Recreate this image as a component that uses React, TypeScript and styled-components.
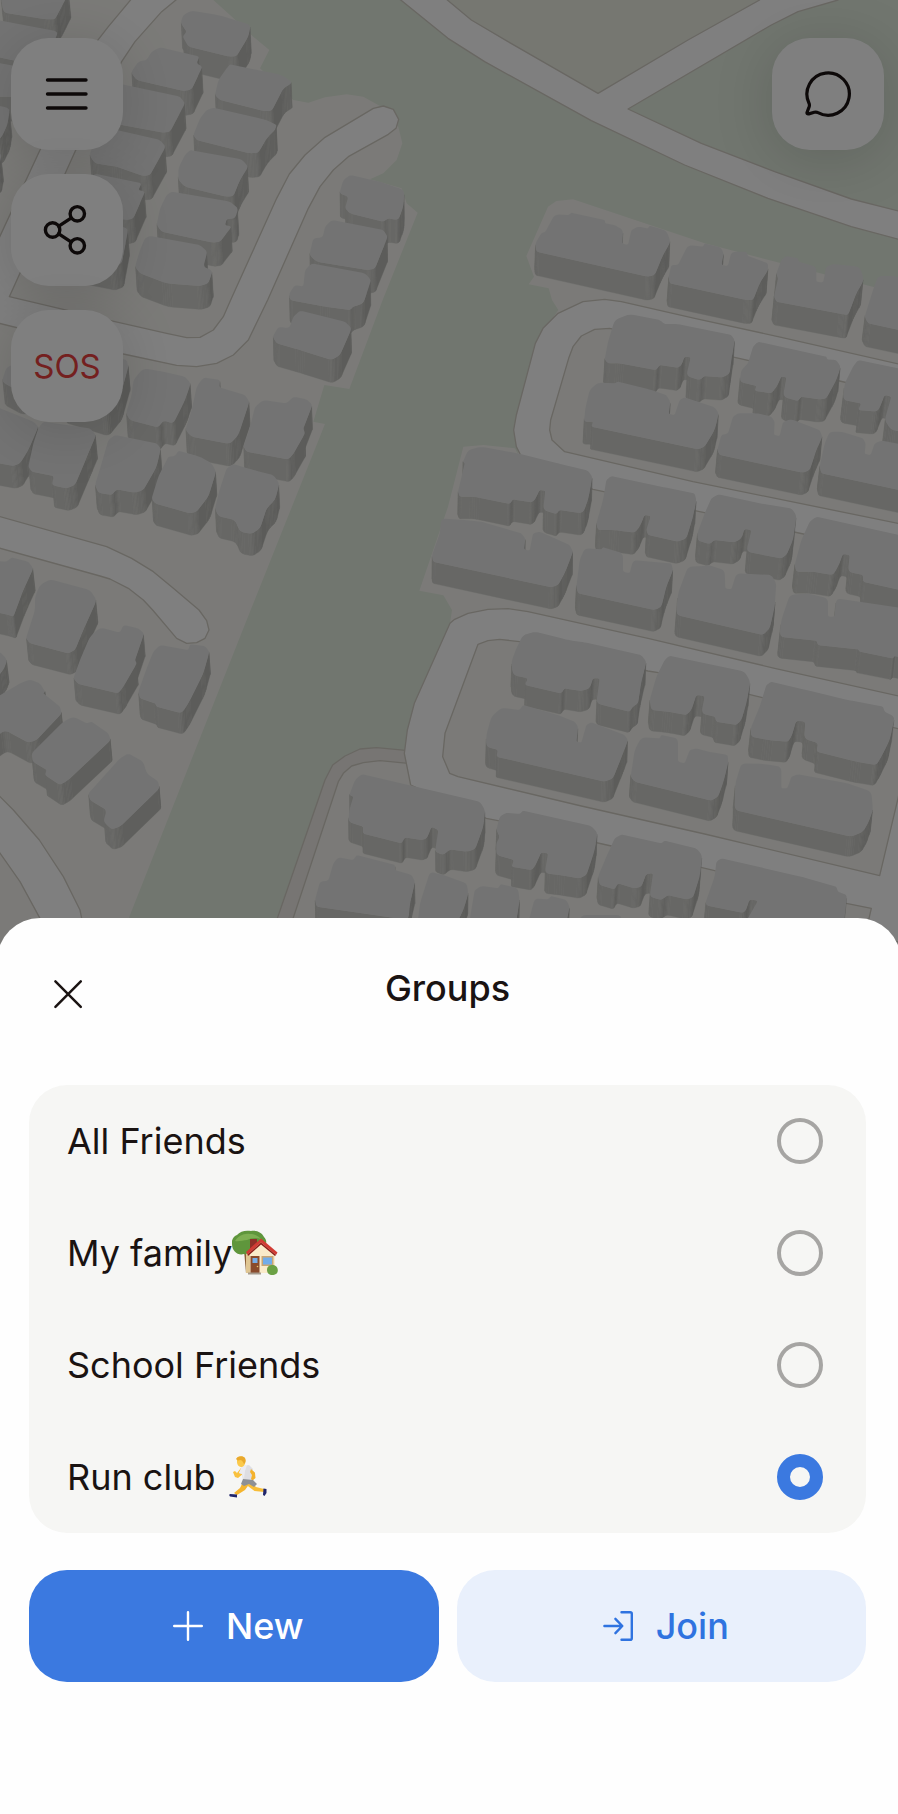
import React, { useState } from "react";
import styled, { createGlobalStyle } from "styled-components";

const GlobalStyle = createGlobalStyle`
  *, *::before, *::after { box-sizing: border-box; }
  body {
    margin: 0;
    background: #ffffff;
    color: #1a1312;
    font-family: Inter, "Liberation Sans", sans-serif;
    -webkit-font-smoothing: antialiased;
  }
  button { font: inherit; cursor: pointer; }
`;

/* ---------- layout ---------- */

const Screen = styled.main`
  position: relative;
  display: flex;
  flex-direction: column;
  min-height: 100vh;
  overflow: hidden;
`;

const Hero = styled.section`
  position: relative;
  flex: 1;
  display: flex;
  justify-content: space-between;
  align-items: flex-start;
  min-height: 480px;
  padding: 38px 14px 0 11px;
`;

const MapSvg = styled.svg`
  position: absolute;
  inset: 0 0 -60px 0;
  width: 100%;
  height: calc(100% + 60px);
`;

const Scrim = styled.div`
  position: absolute;
  inset: 0 0 -60px 0;
  background: rgba(0, 0, 0, 0.5);
`;

const Controls = styled.div`
  position: relative;
  display: flex;
  flex-direction: column;
  gap: 24px;
`;

const MapButton = styled.button<{ $danger?: boolean }>`
  display: flex;
  align-items: center;
  justify-content: center;
  width: 112px;
  height: 112px;
  padding: 0;
  border: 0;
  border-radius: 38px;
  background: #ffffff;
  box-shadow: 0 8px 60px rgba(0, 0, 0, 0.15);
  color: ${(p) => (p.$danger ? "#e8403e" : "#1a1312")};
  font-size: 33px;
`;

const Sheet = styled.section`
  position: relative;
  margin: 0 -3px;
  padding: 0 35px 132px 32px;
  border-radius: 43px 43px 0 0;
  background: #fefefe;
`;

const SheetHeader = styled.header`
  display: grid;
  grid-template-columns: 1fr auto 1fr;
  align-items: start;
  height: 167px;
  padding: 48px 11px 0 11px;
`;

const SheetTitle = styled.h1`
  margin: 0;
  font-size: 36px;
  line-height: 44px;
  font-weight: 500;
`;

const CloseButton = styled.button`
  display: flex;
  align-items: center;
  justify-content: center;
  width: 56px;
  height: 56px;
  padding: 0;
  border: 0;
  background: none;
  color: inherit;
`;

const GroupList = styled.fieldset`
  margin: 0;
  padding: 0;
  border: 0;
  border-radius: 38px;
  background: #f6f6f4;
`;

const GroupRow = styled.label`
  display: flex;
  align-items: center;
  justify-content: space-between;
  height: 112px;
  padding: 0 43px 0 38px;
  font-size: 36px;
  line-height: 44px;
  cursor: pointer;
`;

const GroupName = styled.span<{ $gap: number }>`
  display: flex;
  align-items: center;
  gap: ${(p) => p.$gap}px;
`;

const Radio = styled.input`
  appearance: none;
  width: 46px;
  height: 46px;
  margin: 0;
  border: 4px solid #a6a5a3;
  border-radius: 50%;
  background: transparent;
  cursor: pointer;

  &:checked {
    border: 13px solid #3b79e0;
  }
`;

const Actions = styled.div`
  display: flex;
  gap: 18px;
  margin-top: 37px;
`;

const ActionButton = styled.button<{ $primary?: boolean }>`
  flex: 1;
  display: flex;
  align-items: center;
  justify-content: center;
  gap: 14px;
  height: 112px;
  padding: 0;
  border: 0;
  border-radius: 38px;
  background: ${(p) => (p.$primary ? "#3b79e0" : "#e9f0fc")};
  color: ${(p) => (p.$primary ? "#ffffff" : "#2f73e0")};
  font-size: 36px;
  font-weight: 500;
`;

/* ---------- map geometry, in thirds of a pixel ---------- */

type Pt = [number, number];

const parse = (text: string, ox = 0, oy = 0): Pt[] =>
  text
    .trim()
    .split(/\s+/)
    .map((pair) => {
      const [x, y] = pair.split(",").map(Number);
      return [x + ox, y + oy] as Pt;
    });

const toText = (pts: Pt[]) =>
  pts.map(([x, y]) => `${x.toFixed(1)},${y.toFixed(1)}`).join(" ");

const clockwise = (pts: Pt[]): Pt[] => {
  let area = 0;
  pts.forEach(([x, y], i) => {
    const [nx, ny] = pts[(i + 1) % pts.length];
    area += x * ny - nx * y;
  });
  return area > 0 ? pts : [...pts].reverse();
};

const roundCorners = (pts: Pt[], radius: number): Pt[] => {
  const out: Pt[] = [];
  pts.forEach((p, i) => {
    const a = pts[(i + pts.length - 1) % pts.length];
    const b = pts[(i + 1) % pts.length];
    const la = Math.hypot(a[0] - p[0], a[1] - p[1]);
    const lb = Math.hypot(b[0] - p[0], b[1] - p[1]);
    const r = Math.min(radius, la / 3, lb / 3);
    const s: Pt = [p[0] + ((a[0] - p[0]) * r) / la, p[1] + ((a[1] - p[1]) * r) / la];
    const e: Pt = [p[0] + ((b[0] - p[0]) * r) / lb, p[1] + ((b[1] - p[1]) * r) / lb];
    for (let k = 0; k <= 4; k++) {
      const t = k / 4;
      const u = 1 - t;
      out.push([
        u * u * s[0] + 2 * u * t * p[0] + t * t * e[0],
        u * u * s[1] + 2 * u * t * p[1] + t * t * e[1],
      ]);
    }
  });
  return out;
};

const TILES: { x: number; y: number; roofs: string[] }[] = [
  {
    x: 0,
    y: 0,
    roofs: [
      "0,-30 210,-30 185,20 165,58 140,58 10,38",
      "-60,50 175,95 160,130 60,185 -60,160",
      "-60,180 60,200 60,290 -60,290",
      "-80,300 30,325 22,375 0,420 -80,400",
      "-80,440 5,460 -5,510 -80,500",
      "575,32 655,45 752,75 745,110 710,168 690,170 565,140 548,110 560,95 542,68 550,45",
      "480,142 598,170 590,190 607,200 575,268 550,273 410,240 393,218 415,185 440,180 455,155",
      "690,193 845,225 878,248 850,265 815,333 790,333 660,300 645,285 655,240 680,205",
      "330,245 540,290 555,310 510,395 490,398 340,370",
      "640,323 800,360 830,375 825,390 800,415 775,458 750,460 590,420 580,405 600,355 620,330",
      "330,385 480,420 497,440 450,525 430,528 350,500 285,490 268,465 290,410",
      "570,450 725,478 745,500 720,540 700,588 680,590 555,560 535,540 535,505 555,465",
      "280,520 425,550 415,570 435,575 400,655 380,660 260,630",
      "515,575 690,605 715,625 705,655 680,658 675,675 695,680 660,725 640,728 485,695 470,675 480,625 500,585",
      "250,650 385,685 365,790 340,800 240,780",
      "450,708 600,735 622,755 610,800 638,812 625,850 600,858 500,850 420,820 405,800 420,750 435,715",
      "1050,525 1140,545 1213,570 1210,620 1195,660 1165,655 1150,665 1050,640 1035,625 1045,590 1018,580 1030,540",
      "995,660 1150,690 1163,710 1125,805 1105,810 950,785 928,765 940,715 968,712 975,680",
      "935,790 1095,820 1113,840 1090,910 1060,920 1050,930 975,920 870,900 868,880 885,855 910,860 915,810",
    ],
  },
  {
    x: 1344,
    y: 0,
    roofs: [
      "320,643 362,645 370,638 470,660 472,670 500,675 525,690 522,730 540,735 550,690 570,680 600,685 605,677 655,692 668,725 645,765 620,825 600,830 265,755 262,730 280,700 292,695",
      "720,735 765,740 770,730 818,742 827,760 820,795 840,798 850,755 895,755 900,768 960,790 960,810 935,850 915,900 895,900 665,850 662,830 670,795 690,795",
      "1000,780 1015,768 1050,775 1052,785 1105,800 1105,845 1125,848 1135,800 1155,792 1235,800 1248,840 1225,880 1200,945 1180,942 985,905 978,890 990,835 985,820",
      "1290,828 1340,828 1400,850 1400,1000 1260,970 1250,950 1275,870",
    ],
  },
  {
    x: 0,
    y: 900,
    roofs: [
      "900,32 1035,65 1055,85 1020,165 995,180 900,150 830,130 818,110 835,80 868,85 880,50",
      "20,200 100,180 100,270 60,275 5,245",
      "200,130 380,180 385,200 360,290 320,340 190,300",
      "430,205 490,215 555,230 572,250 555,300 520,370 490,362 475,382 390,360 378,340 395,285 400,240",
      "610,232 660,240 658,262 735,285 748,305 715,405 690,432 575,410 556,390 575,330 590,260",
      "790,300 860,310 880,290 920,298 937,315 910,385 915,400 880,462 865,478 740,455 730,440 750,380 765,320",
      "-60,300 100,365 115,380 85,450 60,490 40,498 -60,480",
      "130,365 270,385 288,405 265,460 225,555 200,565 155,555 162,528 95,515 85,500 100,430 115,385",
      "345,405 470,430 482,445 470,500 430,570 405,578 350,568 335,585 295,578 285,555 305,490 325,420",
      "535,452 600,470 635,490 648,515 625,590 590,635 570,640 465,610 455,595 475,530 505,470 525,468",
      "700,492 760,510 820,525 838,550 825,600 800,625 780,685 755,702 720,695 705,660 655,648 645,625 660,565 680,505",
      "-40,780 20,785 35,772 85,785 100,805 70,870 40,950 25,945 -40,930",
    ],
  },
  {
    x: 1344,
    y: 900,
    roofs: [
      "545,42 635,60 650,72 690,72 850,105 860,120 850,180 845,220 825,232 770,228 755,240 715,228 728,172 710,170 700,195 690,203 635,195 625,210 515,190 480,190 470,178 480,125 500,60",
      "450,248 500,250 510,245 610,270 655,285 667,305 662,342 680,345 695,300 710,292 800,322 812,340 800,390 770,440 750,448 430,380 435,365 408,365 412,325 425,270",
      "930,125 1135,170 1138,178 1165,180 1178,200 1165,240 1135,295 1115,298 1060,290 1050,303 1005,290 1015,232 1000,230 985,262 970,280 920,272 925,258 875,245 880,210 900,190 915,140",
      "870,340 930,340 970,350 980,365 978,405 995,408 1005,365 1030,358 1115,390 1123,410 1105,450 1085,510 1065,518 815,465 808,450 820,405 840,400 855,350",
      "1230,180 1400,215 1400,400 1330,390 1310,360 1330,290 1310,285 1290,335 1230,330 1240,310 1185,300 1190,250 1215,200",
      "1145,395 1180,395 1245,415 1253,430 1250,462 1268,465 1280,430 1300,422 1400,440 1400,580 1120,520 1115,500 1130,430",
      "60,450 100,440 210,460 330,490 420,512 433,530 420,600 405,640 335,630 325,642 285,630 292,572 275,570 260,600 250,607 195,598 185,612 80,590 35,590 30,575 50,490 45,485",
      "-20,655 50,660 100,665 220,700 232,715 228,748 245,752 255,700 275,695 365,735 375,755 350,820 330,855 310,862 -45,785 -48,765 -30,715 -25,700",
      "490,528 640,560 740,580 745,600 735,650 715,715 690,725 600,705 595,690 608,648 590,645 575,680 560,698 500,690 450,690 445,670 465,600 475,540",
      "410,745 460,748 465,742 525,760 525,815 545,820 555,780 670,790 675,810 655,860 640,920 620,930 390,880 385,860 395,780",
      "810,583 935,610 1030,625 1045,645 1035,720 1015,765 1000,775 895,755 910,690 890,687 880,715 860,727 800,720 785,732 750,722 748,700 770,640 790,595",
      "720,800 770,798 780,795 830,810 832,865 850,868 865,820 970,825 985,850 980,920 965,985 945,1005 685,945 690,880",
      "1105,650 1400,715 1400,880 1245,845 1245,825 1200,815 1205,765 1185,762 1170,800 1155,825 1095,815 1045,815 1040,795 1060,720 1085,665",
      "1025,885 1080,880 1140,895 1140,950 1160,950 1165,895 1400,930 1400,1080 1340,1068 1335,1075 1235,1055 1230,1048 1110,1035 1105,1022 995,1010 1000,960",
    ],
  },
  {
    x: 0,
    y: 1830,
    roofs: [
      "150,-92 270,-60 290,-30 250,60 225,120 205,130 90,100 78,85 105,0 105,-40 120,-75",
      "300,52 360,68 370,45 415,55 432,70 405,150 410,160 370,230 355,250 235,222 220,205 240,150 270,80",
      "480,105 565,120 570,103 615,108 628,125 610,190 565,280 545,310 470,290 465,280 420,265 415,245 440,175 460,125",
      "-60,120 0,125 22,150 10,180 -60,260",
      "90,208 120,220 135,245 130,250 180,290 185,310 110,390 85,398 15,360 -40,400 -40,280 60,220",
      "220,320 260,340 275,335 325,370 332,390 205,510 180,525 135,495 140,480 98,455 95,430 190,335",
      "385,430 430,455 440,490 475,515 478,535 360,650 335,658 310,635 320,600 270,570 265,550 360,445",
      "1085,492 1440,575 1455,600 1450,650 1425,718 1400,725 1350,718 1330,735 1305,725 1315,660 1295,650 1280,685 1265,690 1215,682 1205,700 1088,670 1090,650 1045,635 1048,600 1060,560 1048,555 1065,510",
      "1015,742 1060,750 1070,735 1185,765 1185,780 1235,795 1245,815 1230,880 1225,930 950,890 945,870 960,815 985,812 1000,760",
      "1290,785 1330,795 1400,820 1405,850 1390,900 1360,960 1250,960 1260,880",
    ],
  },
  {
    x: 1344,
    y: 1830,
    roofs: [
      "262,65 360,90 410,97 580,135 595,155 580,215 570,280 555,290 545,305 445,280 455,205 435,205 425,235 400,243 350,235 340,250 230,225 240,205 195,195 190,155 205,115 225,75",
      "160,293 215,300 225,285 330,315 380,335 390,350 385,395 400,398 415,345 430,337 530,375 540,390 525,430 495,505 470,515 145,440 150,420 115,410 115,375 130,320",
      "665,137 890,185 907,215 895,280 880,330 865,345 805,335 800,320 760,310 770,258 745,255 730,300 715,315 660,305 610,300 605,270 625,200 650,150",
      "580,382 635,385 640,375 690,385 690,455 710,460 725,420 745,415 780,425 840,435 840,460 825,520 810,560 790,572 560,515 548,500 560,420",
      "970,215 1075,240 1200,270 1305,290 1310,305 1340,320 1325,390 1300,440 1285,465 1225,455 1105,425 1110,400 1068,385 1072,335 1045,332 1030,380 1020,395 960,390 910,380 908,355 935,290 955,225",
      "880,460 950,462 1000,470 1000,535 1018,535 1030,500 1050,493 1200,520 1270,545 1275,600 1260,640 1245,665 1210,680 860,600 862,520",
      "175,608 215,612 225,602 430,648 448,668 440,720 415,795 395,805 335,795 290,790 300,730 280,727 260,770 250,780 190,770 198,750 145,735 145,700 155,680 145,660 155,620",
      "520,673 640,700 650,692 745,715 762,735 755,800 735,862 715,868 660,855 640,870 605,860 615,790 595,792 580,830 560,835 510,820 500,838 455,825 450,800 475,740 500,685",
      "820,745 1060,800 1165,830 1170,845 1197,855 1185,960 880,960 930,872 905,868 890,910 770,885 800,800 805,755",
      "100,828 150,835 158,822 210,835 215,870 200,960 60,960 80,840",
      "260,865 300,868 310,858 355,870 365,890 350,960 235,960",
      "400,915 520,915 520,960 390,960",
    ],
  },
];

const centreY = (pts: Pt[]) => pts.reduce((sum, p) => sum + p[1], 0) / pts.length;

const ROOFS: Pt[][] = TILES.flatMap((tile) =>
  tile.roofs.map((roof) => clockwise(parse(roof, tile.x, tile.y)))
).sort((a, b) => centreY(a) - centreY(b));

const ROADS = {
  park:
    "640,0 690,45 760,110 808,150 780,205 880,300 925,308 975,292 1040,283 1090,290 1140,318 1195,380 1207,430 1190,480 1150,520 1110,538 1205,565 1220,610 1253,638 1148,900 1048,1167 973,1155 940,1265 975,1272 752,1830 388,2750 388,2934 770,2934 832,2750 975,2340 998,2295 1035,2268 1080,2247 1130,2243 1215,2252 1222,2190 1243,2110 1350,1870 1356,1830 1330,1786 1258,1772 1344,1520 1390,1340 1450,1335 1545,1345 1555,1365 1541,1290 1606,1030 1675,930 1656,900 1646,865 1586,853 1602,830 1579,768 1644,620 1669,603 1719,598 2114,730 2694,880 2694,0",
  meadow: "1330,0 2280,0 1793,290 1344,20",
  diagonal:
    "1190,-10 1344,115 1454,185 1774,362 2054,495 2304,595 2554,680 2704,720 2704,635 2554,597 2324,515 2104,430 1884,327 2314,75 2394,35 2514,0 2514,-10 2279,-10 2279,0 2064,120 1794,280 1524,125 1414,60 1330,-10",
  west:
    "400,-10 325,80 290,125 120,450 -10,730 -10,968 370,1062 530,1096 590,1100 650,1090 700,1065 745,1020 803,900 925,625 960,560 1000,510 1045,470 1165,403 1188,385 1196,358 1180,328 1150,318 1120,325 975,412 915,465 868,522 830,595 692,900 670,950 640,990 600,1012 560,1013 500,1000 345,965 28,890 225,455 365,185 405,125 485,35 540,-10",
  lane:
    "-10,1547 320,1640 395,1675 460,1715 520,1765 597,1830 620,1862 627,1890 615,1915 590,1928 560,1930 530,1915 458,1830 430,1800 385,1765 330,1737 300,1728 -10,1642",
  corner:
    "-10,2380 40,2430 118,2520 190,2630 240,2730 260,2830 180,2860 120,2755 60,2645 -10,2545",
};

const LOOPS = [
  {
    y: 900,
    road: "520,5 740,55 1000,112 1360,194 1360,770 1080,705 780,640 435,568 220,470 205,440 197,390 205,345 262,130 285,85 330,40 405,5 470,-2",
    island:
      "485,85 440,88 400,108 375,140 362,175 308,360 305,390 312,420 350,455 735,545 1360,672 1360,287 1175,243 860,172",
  },
  {
    y: 1830,
    road: "240,5 600,85 980,175 1360,260 1360,1000 1255,960 1270,895 1195,880 800,782 490,708 150,632 115,625 -112,525 -131,430 -122,360 -101,280 6,40 20,28 60,10 120,-2 180,-4",
    island:
      "90,103 120,92 155,88 215,95 600,183 645,190 940,262 1360,358 1360,520 1350,565 1295,797 770,672 400,588 30,500 5,490 -16,440 -9,370",
  },
];

const TRACK =
  "832,2755 975,2340 998,2295 1035,2268 1080,2247 1130,2243 1225,2252 1225,2290 1140,2282 1090,2288 1055,2298 1030,2320 1015,2345 820,2934 770,2934";

function Building({ roof }: { roof: Pt[] }) {
  const outline = roundCorners(roof, 14);
  const [x0, y0] = [roof[0][0], centreY(roof)];
  const wx = (1200 - x0) * 0.006;
  const wy = 75 - y0 * 0.006;
  const walls = outline
    .map((a, i) => {
      const b = outline[(i + 1) % outline.length];
      const ex = b[0] - a[0];
      const ey = b[1] - a[1];
      const len = Math.hypot(ex, ey) || 1;
      const facing = ey * wx - ex * wy;
      const side = ey / len;
      const tone = Math.round(208 - (side > 0 ? side * 26 : -side * 6));
      return { a, b, facing, tone, mid: (a[1] + b[1]) / 2 };
    })
    .filter((wall) => wall.facing > 0.01)
    .sort((p, q) => p.mid - q.mid);
  return (
    <g>
      {walls.map(({ a, b, tone }, i) => {
        const fill = `rgb(${tone},${tone},${tone - 4})`;
        return (
          <polygon
            key={i}
            points={toText([a, b, [b[0] + wx, b[1] + wy], [a[0] + wx, a[1] + wy]])}
            fill={fill}
            stroke={fill}
            strokeWidth={1}
          />
        );
      })}
      <polygon points={toText(outline)} fill="#e7e7e7" />
    </g>
  );
}

function StreetMap() {
  const edge = { stroke: "#d2cec5", strokeWidth: 4, strokeLinejoin: "round" as const };
  return (
    <MapSvg viewBox="0 0 2694 2934" preserveAspectRatio="xMidYMin slice" aria-hidden="true">
      <rect width="2694" height="2934" fill="#f6f5f0" />
      <polygon points={ROADS.park} fill="#e2ecde" />
      <polygon points={ROADS.meadow} fill="#ecefe3" />
      <polygon points={TRACK} fill="#eeebe6" {...edge} />
      {[ROADS.diagonal, ROADS.west, ROADS.lane, ROADS.corner].map((road) => (
        <polygon key={road} points={road} fill="#ffffff" {...edge} />
      ))}
      {LOOPS.map((loop) => (
        <g key={loop.y} transform={`translate(1344 ${loop.y})`}>
          <polygon points={loop.road} fill="#ffffff" {...edge} />
          <polygon points={loop.island} fill="#f6f5f0" {...edge} />
        </g>
      ))}
      {ROOFS.map((roof, i) => (
        <Building key={i} roof={roof} />
      ))}
    </MapSvg>
  );
}

/* ---------- icons ---------- */

const line = {
  fill: "none",
  stroke: "currentColor",
  strokeLinecap: "round" as const,
  strokeLinejoin: "round" as const,
};

const MenuIcon = () => (
  <svg width="48" height="48" viewBox="0 0 48 48" strokeWidth="3.4" {...line} aria-hidden="true">
    <path d="M4.5 10h38.5M4.5 24h38.5M4.5 38h38.5" />
  </svg>
);

const ShareIcon = () => (
  <svg width="56" height="56" viewBox="0 0 56 56" strokeWidth="3.4" {...line} aria-hidden="true">
    <circle cx="38.3" cy="11.8" r="7.2" />
    <circle cx="13.6" cy="28" r="7.2" />
    <circle cx="38.3" cy="43.8" r="7.2" />
    <path d="M19.8 24.2L32 16.2M19.8 31.8L32 39.8" />
  </svg>
);

const ChatIcon = () => (
  <svg width="48" height="48" viewBox="0 0 48 48" strokeWidth="3.2" {...line} aria-hidden="true">
    <path d="M5 33.2A21.2 21.2 0 1 1 14 42.7C12.8 42 11.6 41.9 10.3 42.3L4.800 43.900C3.400 44.300 2.700 43.500 3.100 42.200L5.200 36.600C5.600 35.400 5.500 34.300 5 33.200Z" />
  </svg>
);

const CloseIcon = () => (
  <svg width="32" height="32" viewBox="0 0 32 32" strokeWidth="2.5" {...line} aria-hidden="true">
    <path d="M3.4 3.4l25.4 25.4M28.8 3.4L3.4 28.8" />
  </svg>
);

const PlusIcon = () => (
  <svg width="48" height="48" viewBox="0 0 48 48" strokeWidth="2.4" {...line} aria-hidden="true">
    <path d="M24 10.2v27.6M10.2 24h27.6" />
  </svg>
);

const JoinIcon = () => (
  <svg width="48" height="48" viewBox="0 0 48 48" strokeWidth="2.4" {...line} aria-hidden="true">
    <path d="M27.5 10.2h8.7a1.6 1.6 0 0 1 1.6 1.6v24.4a1.6 1.6 0 0 1-1.6 1.6h-8.7M10.4 24h17.8M21.4 16.8l6.9 7.2-6.9 7.2" />
  </svg>
);

const HouseEmoji = () => (
  <svg width="46" height="46" viewBox="0 0 46 46" role="img" aria-label="house with garden">
    <path d="M12 20h6v23h-4z" fill="#8a5f35" />
    <path
      d="M0 14c-1-4 2-8 5-9 3-4 9-5 14-4 6-1 11 2 13 6 3 3 3 7 0 9-2 5-6 6-9 6-2 3-7 4-11 2-6 2-12-3-12-10z"
      fill="#5f963c"
    />
    <path d="M3 11c3-5 9-8 15-7 5 0 8 2 11 5-5-2-10-1-14 1-4 0-8 2-12 1z" fill="#86b557" opacity=".8" />
    <path d="M16 23l13-12 14 13v19H15z" fill="#faebca" />
    <path d="M14 24v19h4V22z" fill="#e0c692" />
    <path d="M18 9h7v6l-7 6z" fill="#8f2f28" />
    <path d="M14 22L29 8.500 45.500 22.500 44 25 29 12.500 15.500 24.500z" fill="#d23b34" />
    <path d="M15.500 24.500L29 12.500 44 25l-1 1L29 14.500 16 26z" fill="#8d1d1b" />
    <rect x="18.500" y="26" width="9" height="17" fill="#8a4b2c" />
    <rect x="20.500" y="28" width="5" height="5" fill="#76aee8" />
    <circle cx="25.500" cy="36.500" r=".8" fill="#e9c56b" />
    <rect x="29.500" y="26" width="12" height="10" fill="#c9a674" />
    <rect x="31" y="27.500" width="9" height="7" fill="#72adea" />
    <path d="M16 42.500h13v2H16z" fill="#a59a8c" />
    <path d="M35 40c0-4 3-5 5.500-5s5.500 2 5.300 5.500c0 3-2.500 4.500-5.500 4.500s-5.300-2-5.300-5z" fill="#6ba144" />
  </svg>
);

const RunnerEmoji = () => (
  <svg width="38" height="42" viewBox="0 0 38 42" role="img" aria-label="runner">
    <path d="M14 26l-3 6-6 5 3 2 8-5 5-7z" fill="#f5b52e" />
    <path d="M22 26l5 5 8 2 .5 3-10-1-8-6z" fill="#f7bd38" />
    <path d="M12 12l-4 5-2-2-2 1 2 5 3 1 6-5z" fill="#f9c13e" />
    <path d="M21 12l5 5-1 6-3 1-1-2 2-4-4-4z" fill="#f4b22c" />
    <path d="M13 10l7-1 4 4-1 12-9-1-1-6-3-1z" fill="#dedee2" />
    <path d="M13 10l5-1-2 6-1 8-2-5-3-1z" fill="#ececf0" />
    <path d="M22 13l4 4 .5 5-3 2.500-1.500-1.500 1-4-2-3z" fill="#f4b22c" />
    <path d="M14 23l10 1 4 4-3 3-5-3-5 2-3-2z" fill="#8d9095" />
    <path d="M8 2c2-2 7-2 8 1 1 3 0 7-3 8-3 0-5-2-5-5z" fill="#fbc94b" />
    <path d="M7 3c1-3 7-4 9-1 1 2 1 4-1 6-1-2-2-4-4-4-2 1-3 0-4-1z" fill="#e9a92c" />
    <path d="M1 38l7 .5v3L1 40.500c-1-1-1-2 0-2.500z" fill="#20256b" />
    <path d="M34.500 32.500l3 .5v4l-2 3-1.500-1z" fill="#20256b" />
  </svg>
);

/* ---------- screen ---------- */

const GROUPS: { id: string; name: string; gap: number; emoji?: React.ReactNode }[] = [
  { id: "all", name: "All Friends", gap: 0 },
  { id: "family", name: "My family", gap: 0, emoji: <HouseEmoji /> },
  { id: "school", name: "School Friends", gap: 0 },
  { id: "run", name: "Run club", gap: 14, emoji: <RunnerEmoji /> },
];

export default function App() {
  const [selected, setSelected] = useState("run");
  return (
    <Screen>
      <GlobalStyle />
      <Hero>
        <StreetMap />
        <Controls>
          <MapButton type="button" aria-label="Menu">
            <MenuIcon />
          </MapButton>
          <MapButton type="button" aria-label="Share">
            <ShareIcon />
          </MapButton>
          <MapButton type="button" $danger>
            SOS
          </MapButton>
        </Controls>
        <Controls>
          <MapButton type="button" aria-label="Chat">
            <ChatIcon />
          </MapButton>
        </Controls>
        <Scrim />
      </Hero>
      <Sheet role="dialog" aria-labelledby="groups-title">
        <SheetHeader>
          <CloseButton type="button" aria-label="Close">
            <CloseIcon />
          </CloseButton>
          <SheetTitle id="groups-title">Groups</SheetTitle>
        </SheetHeader>
        <GroupList aria-labelledby="groups-title">
          {GROUPS.map((group) => (
            <GroupRow key={group.id} htmlFor={`group-${group.id}`}>
              <GroupName $gap={group.gap}>
                {group.name}
                {group.emoji}
              </GroupName>
              <Radio
                type="radio"
                id={`group-${group.id}`}
                name="group"
                value={group.id}
                checked={selected === group.id}
                onChange={() => setSelected(group.id)}
              />
            </GroupRow>
          ))}
        </GroupList>
        <Actions>
          <ActionButton type="button" $primary>
            <PlusIcon />
            New
          </ActionButton>
          <ActionButton type="button">
            <JoinIcon />
            Join
          </ActionButton>
        </Actions>
      </Sheet>
    </Screen>
  );
}
